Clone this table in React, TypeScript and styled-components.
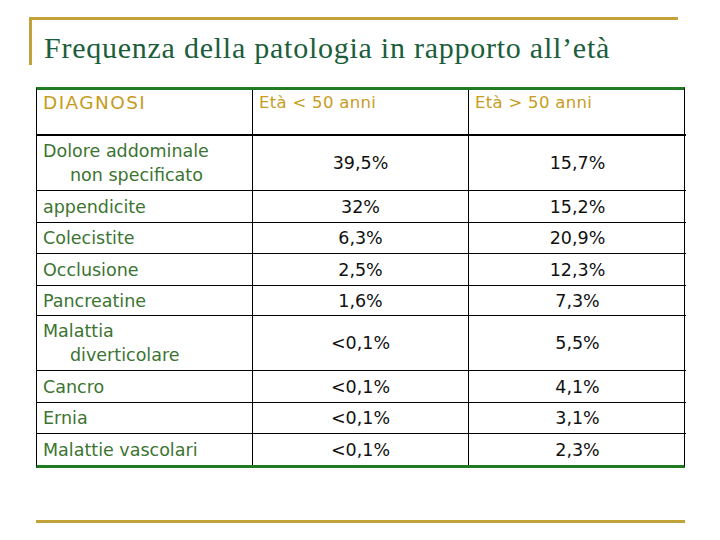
import React from "react";
import styled, { createGlobalStyle } from "styled-components";

const Global = createGlobalStyle`
  html, body { margin: 0; padding: 0; background: #ffffff; }
  #root { width: 720px; height: 540px; }
`;

const Page = styled.div`
  width: 720px;
  height: 540px;
  background: #fff;
  display: flex;
  flex-direction: column;
  padding-top: 17px;
  box-sizing: border-box;
`;

const TitleFrame = styled.div`
  margin-left: 29px;
  width: 649px;
  border-top: 3px solid #c3a23a;
`;

const TitleBar = styled.div`
  border-left: 3px solid #c3a23a;
  height: 45px;
  padding-left: 12px;
  display: flex;
  align-items: flex-end;
`;

const Title = styled.h1`
  margin: 0;
  font-family: "Liberation Serif", "Times New Roman", serif;
  font-weight: normal;
  font-size: 30px;
  letter-spacing: 0.75px;
  line-height: 34px;
  color: #1b5e3c;
  white-space: nowrap;
`;

const Table = styled.div`
  margin-top: 22px;
  margin-left: 36px;
  width: 649px;
  display: grid;
  grid-template-columns: 216px 216px 217px;
  border-top: 3px solid #1f7a22;
  border-bottom: 3px solid #1f7a22;
  border-left: 1px solid #000;
  border-right: 1px solid #000;
  box-sizing: border-box;
`;

const Cell = styled.div<{ $h: number; $last?: boolean; $thick?: boolean; $noBottom?: boolean }>`
  height: ${(p) => p.$h}px;
  box-sizing: border-box;
  border-right: ${(p) => (p.$last ? "none" : "1px solid #000")};
  border-bottom: ${(p) => (p.$thick ? "2px solid #000" : p.$noBottom ? "none" : "1px solid #000")};
  font-family: "DejaVu Sans", "Comic Sans MS", sans-serif;
  font-size: 17.5px;
  display: flex;
`;

const HeadCell = styled(Cell)<{ $wide?: boolean }>`
  color: #c69c1e;
  padding: ${(p) => (p.$wide ? "2px" : "3px")} 0 0 6px;
  align-items: flex-start;
  font-size: ${(p) => (p.$wide ? "18.5px" : "16.5px")};
  letter-spacing: ${(p) => (p.$wide ? "1.4px" : "0.3px")};
`;

const LabelCell = styled(Cell)`
  color: #3c7431;
  align-items: center;
  padding-left: 33px;
`;

const LabelText = styled.span`
  text-indent: -27px;
  line-height: 24px;
  display: block;
`;

const ValueCell = styled(Cell)`
  color: #111;
  align-items: center;
  justify-content: center;
`;

const BottomLine = styled.div`
  margin-top: 52px;
  margin-left: 36px;
  width: 649px;
  height: 3px;
  background: #c3a23a;
`;

const rows: { label: string; a: string; b: string; h: number }[] = [
  { label: "Dolore addominale non specificato", a: "39,5%", b: "15,7%", h: 55 },
  { label: "appendicite", a: "32%", b: "15,2%", h: 32 },
  { label: "Colecistite", a: "6,3%", b: "20,9%", h: 31 },
  { label: "Occlusione", a: "2,5%", b: "12,3%", h: 32 },
  { label: "Pancreatine", a: "1,6%", b: "7,3%", h: 30 },
  { label: "Malattia diverticolare", a: "<0,1%", b: "5,5%", h: 55 },
  { label: "Cancro", a: "<0,1%", b: "4,1%", h: 32 },
  { label: "Ernia", a: "<0,1%", b: "3,1%", h: 31 },
  { label: "Malattie vascolari", a: "<0,1%", b: "2,3%", h: 31 },
];

const multiline: Record<string, [string, string]> = {
  "Dolore addominale non specificato": ["Dolore addominale", "non specificato"],
  "Malattia diverticolare": ["Malattia", "diverticolare"],
};

export default function App() {
  return (
    <>
      <Global />
      <Page>
        <TitleFrame>
          <TitleBar>
            <Title>Frequenza della patologia in rapporto all’età</Title>
          </TitleBar>
        </TitleFrame>
        <Table>
          <HeadCell $h={46} $thick $wide>DIAGNOSI</HeadCell>
          <HeadCell $h={46} $thick>Età &lt; 50 anni</HeadCell>
          <HeadCell $h={46} $thick $last>Età &gt; 50 anni</HeadCell>
          {rows.map((r, i) => {
            const last = i === rows.length - 1;
            const m = multiline[r.label];
            return (
              <React.Fragment key={r.label}>
                <LabelCell $h={r.h} $noBottom={last}>
                  <LabelText>
                    {m ? (
                      <>
                        {m[0]}
                        <br />
                        {m[1]}
                      </>
                    ) : (
                      r.label
                    )}
                  </LabelText>
                </LabelCell>
                <ValueCell $h={r.h} $noBottom={last}>{r.a}</ValueCell>
                <ValueCell $h={r.h} $noBottom={last} $last>{r.b}</ValueCell>
              </React.Fragment>
            );
          })}
        </Table>
        <BottomLine />
      </Page>
    </>
  );
}
